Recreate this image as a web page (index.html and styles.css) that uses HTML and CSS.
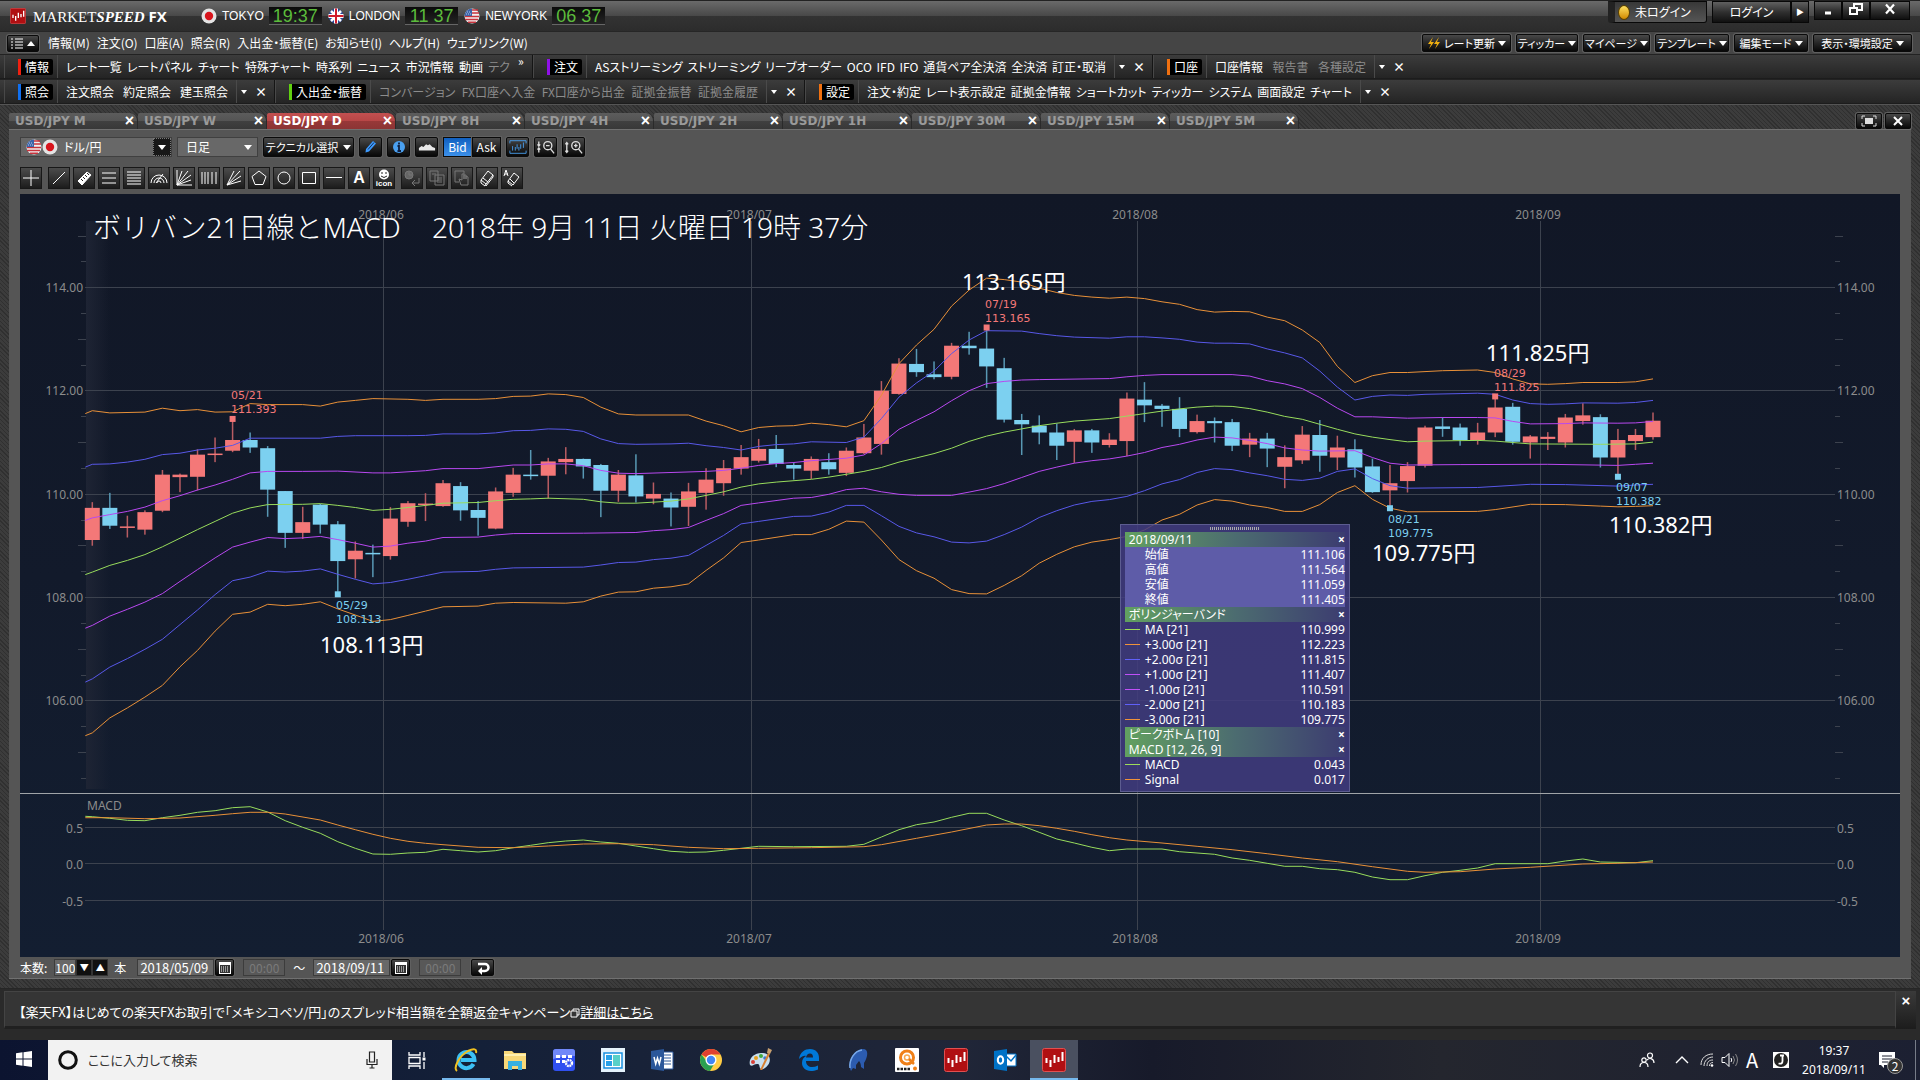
FILE: index.html
```html
<!DOCTYPE html>
<html lang="ja">
<head>
  <meta charset="UTF-8">
  <title>MARKETSPEED FX</title>
  <link rel="stylesheet" href="styles.css">
</head>
<body>

<!-- 共通アイコン -->
<svg class="defs" aria-hidden="true">
  <symbol id="jp" viewBox="0 0 16 16"><circle cx="8" cy="8" r="7.5" fill="#e4e4e4"/><circle cx="8" cy="8" r="4.2" fill="#d8141c"/></symbol>
  <symbol id="us" viewBox="0 0 16 16"><circle cx="8" cy="8" r="7.5" fill="#f0f0f0"/><path d="M8 2h6M8 5h7M1 8.500h14M1 11.500h13M4 14.300h8" stroke="#c8323c" stroke-width="1.500"/><path d="M8 .5A7.500 7.500 0 0 0 .5 8H8z" fill="#3c64a8"/><path d="M3 4h4M2 6h5" stroke="#b8c8e8" stroke-dasharray="1 1"/></symbol>
  <symbol id="uk" viewBox="0 0 16 16"><circle cx="8" cy="8" r="7.500" fill="#2a4a9a"/><path d="M3 3l10 10M13 3L3 13" stroke="#fff" stroke-width="2.500"/><path d="M8 .5v15M.5 8h15" stroke="#fff" stroke-width="4"/><path d="M8 .5v15M.5 8h15" stroke="#d01c2c" stroke-width="2"/></symbol>
  <symbol id="ms" viewBox="0 0 24 24"><rect x=".5" y=".5" width="23" height="23" rx="2" fill="#b00f12" stroke="#e05050"/><path d="M4.500 10v5M8.500 12v7M12.500 7v8M16.500 9v5M20.500 4v9" stroke="#fff" stroke-width="2"/></symbol>
  <symbol id="cal" viewBox="0 0 14 14"><path d="M1 1h12v12H1z" fill="#fff"/><path d="M2 4h10v8H2z" fill="#333"/><path d="M3 6h8M3 8h8M3 10h8" stroke="#fff" stroke-dasharray="1 1"/></symbol>
</svg>

<header class="titlebar">
  <svg class="i16"><use href="#ms"/></svg>
  <h1 class="brand">MARKET<em>SPEED</em> <b>FX</b></h1>
  <div class="clocks">
    <div class="clock"><svg class="i16"><use href="#jp"/></svg><span>TOKYO</span><time>19:37</time></div>
    <div class="clock"><svg class="i16"><use href="#uk"/></svg><span>LONDON</span><time>11 37</time></div>
    <div class="clock"><svg class="i16"><use href="#us"/></svg><span>NEWYORK</span><time>06 37</time></div>
  </div>
  <div class="login">
    <span class="login-state"><i class="lamp"></i>未ログイン</span>
    <button class="login-btn">ログイン</button><button class="login-more" aria-label="ログインメニュー">▶</button>
  </div>
  <div class="winbtns">
    <button aria-label="最小化"><svg viewBox="0 0 16 14"><path d="M5 11h6" stroke="#fff" stroke-width="3"/></svg></button>
    <button aria-label="元に戻す"><svg viewBox="0 0 16 14"><path d="M6 5V2h8v6h-4M2 6h7v6H2z" fill="none" stroke="#fff" stroke-width="2"/></svg></button>
    <button class="wide" aria-label="閉じる"><svg viewBox="0 0 16 14"><path d="M4 2.500l8 9M12 2.500l-8 9" stroke="#fff" stroke-width="2.200"/></svg></button>
  </div>
</header>

<nav class="menubar">
  <button class="menu-toggle btn" aria-label="メニュー"><svg viewBox="0 0 24 12"><path d="M0 2h2M4 2h8M0 5h2M4 5h8M0 8h2M4 8h8M0 11h2M4 11h8" stroke="#fff"/><path d="M16 9h8l-4-5z" fill="#fff"/></svg></button>
  <div class="menus">
    <a href="#">情報(M)</a><a href="#">注文(O)</a><a href="#">口座(A)</a><a href="#">照会(R)</a><a href="#">入出金・振替(E)</a><a href="#">お知らせ(I)</a><a href="#">ヘルプ(H)</a><a href="#">ウェブリンク(W)</a>
  </div>
  <div class="quick">
    <button class="btn q-rate"><svg viewBox="0 0 14 14"><path d="M6 1L1 8h3l-2 5 5-7H4zM12 1L7 8h3l-2 5 5-7h-3z" fill="#f0b010"/></svg>レート更新<i class="dd"></i></button>
    <button class="btn q-a">ティッカー<i class="dd"></i></button>
    <button class="btn q-b">マイページ<i class="dd"></i></button>
    <button class="btn q-c">テンプレート<i class="dd"></i></button>
    <button class="btn q-c">編集モード<i class="dd"></i></button>
    <button class="btn q-d">表示・環境設定<i class="dd"></i></button>
  </div>
</nav>

<div class="toolrow">
  <div class="group g-info"><i class="grip"></i><b class="tag red">情報</b>
    <div class="items"><a href="#">レート一覧</a><a href="#">レートパネル</a><a href="#">チャート</a><a href="#">特殊チャート</a><a href="#">時系列</a><a href="#">ニュース</a><a href="#">市況情報</a><a href="#">動画</a><a href="#" class="off">テク</a></div>
    <span class="more">»</span></div>
  <div class="group g-order"><i class="grip"></i><b class="tag purple">注文</b>
    <div class="items"><a href="#">ASストリーミング</a><a href="#">ストリーミング</a><a href="#">リーブオーダー</a><a href="#">OCO</a><a href="#">IFD</a><a href="#">IFO</a><a href="#">通貨ペア全決済</a><a href="#">全決済</a><a href="#">訂正・取消</a></div>
    <div class="ctl"><button aria-label="展開"><i class="dd"></i></button><button aria-label="閉じる">×</button></div></div>
  <div class="group g-acct"><i class="grip"></i><b class="tag orange">口座</b>
    <div class="items"><a href="#">口座情報</a><a href="#" class="off">報告書</a><a href="#" class="off">各種設定</a></div>
    <div class="ctl"><button aria-label="展開"><i class="dd"></i></button><button aria-label="閉じる">×</button></div></div>
</div>
<div class="toolrow">
  <div class="group g-query"><i class="grip"></i><b class="tag blue">照会</b>
    <div class="items"><a href="#">注文照会</a><a href="#">約定照会</a><a href="#">建玉照会</a></div>
    <div class="ctl"><button aria-label="展開"><i class="dd"></i></button><button aria-label="閉じる">×</button></div></div>
  <div class="group g-cash"><i class="grip"></i><b class="tag green">入出金・振替</b>
    <div class="items off"><a href="#">コンバージョン</a><a href="#">FX口座へ入金</a><a href="#">FX口座から出金</a><a href="#">証拠金振替</a><a href="#">証拠金履歴</a></div>
    <div class="ctl"><button aria-label="展開"><i class="dd"></i></button><button aria-label="閉じる">×</button></div></div>
  <div class="group g-setup"><i class="grip"></i><b class="tag orange">設定</b>
    <div class="items"><a href="#">注文・約定</a><a href="#">レート表示設定</a><a href="#">証拠金情報</a><a href="#">ショートカット</a><a href="#">ティッカー</a><a href="#">システム</a><a href="#">画面設定</a><a href="#">チャート</a></div>
    <div class="ctl"><button aria-label="展開"><i class="dd"></i></button><button aria-label="閉じる">×</button></div></div>
</div>

<main class="desk">
  <div class="tabs">
    <div class="tab">USD/JPY M<button aria-label="閉じる">×</button></div>
    <div class="tab">USD/JPY W<button aria-label="閉じる">×</button></div>
    <div class="tab on">USD/JPY D<button aria-label="閉じる">×</button></div>
    <div class="tab">USD/JPY 8H<button aria-label="閉じる">×</button></div>
    <div class="tab">USD/JPY 4H<button aria-label="閉じる">×</button></div>
    <div class="tab">USD/JPY 2H<button aria-label="閉じる">×</button></div>
    <div class="tab">USD/JPY 1H<button aria-label="閉じる">×</button></div>
    <div class="tab">USD/JPY 30M<button aria-label="閉じる">×</button></div>
    <div class="tab">USD/JPY 15M<button aria-label="閉じる">×</button></div>
    <div class="tab">USD/JPY 5M<button aria-label="閉じる">×</button></div>
    <div class="tabs-end">
      <button class="btn" aria-label="最大化"><svg viewBox="0 0 16 12"><path d="M1 4V1h3M12 1h3v3M15 8v3h-3M4 11H1V8" fill="none" stroke="#ddd"/><path d="M4 3h8v6H4z" fill="#ddd"/></svg></button>
      <button class="btn" aria-label="閉じる"><svg viewBox="0 0 16 12"><path d="M4 2l8 8M12 2l-8 8" stroke="#fff" stroke-width="2"/></svg></button>
    </div>
  </div>

  <section class="win">
    <div class="bar">
      <label class="combo pair"><svg class="i16"><use href="#us"/></svg><svg class="i16"><use href="#jp"/></svg><select aria-label="通貨ペア"><option>ドル/円</option></select><span class="combo-btn"><i class="dd"></i></span></label>
      <label class="combo span"><select aria-label="足種"><option>日足</option></select><i class="dd"></i></label>
      <button class="btn tech">テクニカル選択<i class="dd"></i></button>
      <button class="btn ic" aria-label="描画"><svg viewBox="0 0 16 16"><path d="M3 10l7-8 3 2.500-7 8-3.500 1z" fill="#3c9aff"/><path d="M5 10.500l6-7" stroke="#12305a"/></svg></button>
      <button class="btn ic" aria-label="情報"><svg viewBox="0 0 16 16"><circle cx="8" cy="8" r="6" fill="#4aa0f0"/><path d="M8 3.500v2M6.500 7H8v5M6.500 12h3.500" stroke="#102040" stroke-width="1.800" fill="none"/></svg></button>
      <button class="btn ic" aria-label="エリア"><svg viewBox="0 0 20 16"><path d="M1 12V9l3-2 2 1 3-3 2 1 2-1 3 3 3 1v3z" fill="#e8e8e8"/></svg></button>
      <div class="seg"><button class="btn on">Bid</button><button class="btn">Ask</button></div>
      <button class="btn ic" aria-label="自動調整"><svg viewBox="0 0 20 16"><path d="M1 4V1h18v3M1 12v3h18v-3M4 7v5M7 8v4M9 5v5M11 8v4M13 5v5M16 3v6" fill="none" stroke="#4aa0f0"/></svg></button>
      <button class="btn ic" aria-label="縮小"><svg viewBox="0 0 20 16"><g fill="none" stroke="#ddd" stroke-width="1.500"><circle cx="12" cy="6.500" r="4.500"/><path d="M15 10l4 5M10 6.500h4M2 2v4M2 14v-4M.5 5L2 7l1.500-2M.5 11L2 9l1.500 2"/></g></svg></button>
      <button class="btn ic" aria-label="拡大"><svg viewBox="0 0 20 16"><g fill="none" stroke="#ddd" stroke-width="1.500"><circle cx="12" cy="6.500" r="4.500"/><path d="M15 10l4 5M10 6.500h4M12 4.500v4M2 3v11M.5 5L2 3l1.500 2M.5 12L2 14l1.500-2"/></g></svg></button>
    </div>
    <div class="bar draw">
      <button class="btn" aria-label="十字"><svg viewBox="0 0 18 18"><path d="M1 9h16M9 1v16"/></svg></button>
      <button class="btn gap" aria-label="直線"><svg viewBox="0 0 18 18"><path d="M3 15L15 3"/></svg></button>
      <button class="btn" aria-label="定規"><svg viewBox="0 0 18 18"><path d="M3 12L12 3l4 3-9 10z" fill="#fff"/><path d="M6 10l2 2M8 8l2 2M10 6l2 2M12 4l2 2" stroke="#222"/></svg></button>
      <button class="btn" aria-label="水平3本"><svg viewBox="0 0 18 18"><path d="M2 4h14M2 9h14M2 14h14"/></svg></button>
      <button class="btn" aria-label="水平5本"><svg viewBox="0 0 18 18"><path d="M2 3h14M2 6h14M2 9h14M2 12h14M2 15h14"/></svg></button>
      <button class="btn" aria-label="アーク"><svg viewBox="0 0 18 18"><path d="M1 14a8 8 0 0 1 16 0M4 14a5 5 0 0 1 10 0M7 14a2 2 0 0 1 4 0M6 14l7-9"/></svg></button>
      <button class="btn" aria-label="ファン"><svg viewBox="0 0 18 18"><path d="M2 1v15h15M2 16L7 2M2 16L13 2M2 16L16 6M2 16l14-5"/></svg></button>
      <button class="btn" aria-label="垂直"><svg viewBox="0 0 18 18"><path d="M2 3v12M5 3v12M8 3v12M12 3v12M16 3v12"/></svg></button>
      <button class="btn" aria-label="ギャン"><svg viewBox="0 0 18 18"><path d="M2 16L9 2M2 16L15 2M2 16l14-9M2 16l14-4"/></svg></button>
      <button class="btn" aria-label="五角形"><svg viewBox="0 0 18 18"><path d="M9 2l7 5.500-3 8H5l-3-8z"/></svg></button>
      <button class="btn" aria-label="円"><svg viewBox="0 0 18 18"><circle cx="9" cy="9" r="6"/></svg></button>
      <button class="btn" aria-label="四角"><svg viewBox="0 0 18 18"><path d="M2.500 3.500h13v11h-13z"/></svg></button>
      <button class="btn" aria-label="線分"><svg viewBox="0 0 18 18"><path d="M1 8.500h16"/></svg></button>
      <button class="btn letter">A</button>
      <button class="btn icon-btn"><svg viewBox="0 0 18 11"><circle cx="9" cy="5.500" r="5" fill="#fff" stroke="none"/><path d="M7 3v2M11 3v2M6 7q3 3 6 0" stroke="#222"/></svg>icon</button>
      <button class="btn gap dim" aria-label="戻す"><svg viewBox="0 0 18 18"><circle cx="6" cy="6" r="4" fill="#666"/><path d="M16 9v5H9M12 11l-3 3 3 3M6 3v3h3"/></svg></button>
      <button class="btn dim" aria-label="複製"><svg viewBox="0 0 18 18"><path d="M2 2h8v10H2zM7 6h9v10H7zM9 9h5M9 11h5M9 13h5M4 5h4"/></svg></button>
      <button class="btn dim" aria-label="移動"><svg viewBox="0 0 18 18"><path d="M2 2h9v3M2 2v11h4M6 10l2 6h7V8l-2-1v3-4h-2v4-5H9v6z"/></svg></button>
      <button class="btn" aria-label="消去"><svg viewBox="0 0 18 18"><path d="M3 11l7-9 5 4-7 9zM5 9l5 4M3 11v3l4 3 1-2M15 6v2l-7 9"/></svg></button>
      <button class="btn" aria-label="全消去"><svg viewBox="0 0 18 18"><path d="M5 12l6-8 5 4-6 8zM7 10l4 4M5 12v2l4 3M1 7l2-6 2 6M2 5h3"/></svg></button>
    </div>

    <div class="chart">
      <svg id="chart" viewBox="20 194 1880 763" preserveAspectRatio="xMidYMin meet" role="img" aria-label="USD/JPY 日足 ボリンジャーバンドとMACD"></svg>
      <div class="legend">
        <i class="handle"></i>
        <table>
          <tbody>
            <tr class="head"><th colspan="2">2018/09/11</th><td><button aria-label="閉じる">×</button></td></tr>
            <tr class="px"><td></td><th>始値</th><td>111.106</td></tr>
            <tr class="px"><td></td><th>高値</th><td>111.564</td></tr>
            <tr class="px"><td></td><th>安値</th><td>111.059</td></tr>
            <tr class="px"><td></td><th>終値</th><td>111.405</td></tr>
            <tr class="head"><th colspan="2">ボリンジャーバンド</th><td><button aria-label="閉じる">×</button></td></tr>
            <tr><td><i class="ln c-ma"></i></td><th>MA [21]</th><td>110.999</td></tr>
            <tr><td><i class="ln c-s3"></i></td><th>+3.00σ [21]</th><td>112.223</td></tr>
            <tr><td><i class="ln c-s2"></i></td><th>+2.00σ [21]</th><td>111.815</td></tr>
            <tr><td><i class="ln c-s1"></i></td><th>+1.00σ [21]</th><td>111.407</td></tr>
            <tr><td><i class="ln c-s1"></i></td><th>-1.00σ [21]</th><td>110.591</td></tr>
            <tr><td><i class="ln c-s2"></i></td><th>-2.00σ [21]</th><td>110.183</td></tr>
            <tr><td><i class="ln c-s3"></i></td><th>-3.00σ [21]</th><td>109.775</td></tr>
            <tr class="head"><th colspan="2">ピークボトム [10]</th><td><button aria-label="閉じる">×</button></td></tr>
            <tr class="head"><th colspan="2">MACD [12, 26, 9]</th><td><button aria-label="閉じる">×</button></td></tr>
            <tr><td><i class="ln c-ma"></i></td><th>MACD</th><td>0.043</td></tr>
            <tr><td><i class="ln c-s3"></i></td><th>Signal</th><td>0.017</td></tr>
          </tbody>
        </table>
      </div>
    </div>

    <form class="range">
      <label for="count">本数:</label>
      <div class="spin"><input id="count" type="text" value="100"><button type="button" aria-label="減らす">▼</button><button type="button" aria-label="増やす">▲</button></div>
      <span class="unit">本</span>
      <input class="date" type="text" value="2018/05/09" aria-label="開始日"><button type="button" class="btn cal" aria-label="カレンダー"><svg><use href="#cal"/></svg></button>
      <input class="hm" type="text" value="00:00" aria-label="開始時刻" disabled>
      <span class="tilde">～</span>
      <input class="date" type="text" value="2018/09/11" aria-label="終了日"><button type="button" class="btn cal" aria-label="カレンダー"><svg><use href="#cal"/></svg></button>
      <input class="hm" type="text" value="00:00" aria-label="終了時刻" disabled>
      <button type="button" class="btn apply" aria-label="更新"><svg viewBox="0 0 16 14"><path d="M3 3h7a3 3 0 0 1 0 7H6" fill="none" stroke="#fff" stroke-width="2.500"/><path d="M7 6v8l-4-4z" fill="#fff"/></svg></button>
    </form>
  </section>
</main>

<div class="news">
  <p>【楽天FX】はじめての楽天FXお取引で「メキシコペソ/円」のスプレッド相当額を全額返金キャンペーン<svg viewBox="0 0 10 10"><path d="M1 3h6v6H1zM3 3V1h6v6H7" fill="none" stroke="#fff"/></svg><a href="#">詳細はこちら</a></p>
  <button aria-label="閉じる">×</button>
</div>

<footer class="taskbar">
  <button class="start" aria-label="スタート"><svg viewBox="0 0 16 16"><path d="M0 2.300l6.500-1v6.200H0zM7.500 1.200L16 0v7.500H7.500zM0 8.500h6.500v6.200L0 13.700zM7.500 8.500H16V16l-8.500-1.200z" fill="#fff"/></svg></button>
  <label class="search"><svg class="cortana" viewBox="0 0 20 20"><circle cx="10" cy="10" r="8.300" fill="none" stroke="#111" stroke-width="3"/></svg><input type="text" placeholder="ここに入力して検索"><svg class="mic" viewBox="0 0 12 18"><path d="M3.500 1h5v10h-5zM1 8v5.500h10V8M6 13.500V17M3.500 17h5" fill="none" stroke="#222" stroke-width="1.200"/></svg></label>
  <div class="apps">
    <button aria-label="タスクビュー"><svg viewBox="0 0 24 24"><path d="M4 4v3h11V4M4 21v-3h11v3M4 9.500h11v6H4zM19 4v5M19 14v7" fill="none" stroke="#fff" stroke-width="1.300"/><path d="M17.500 9.500h3v3h-3z" fill="#fff"/></svg></button>
    <button class="run" aria-label="Internet Explorer"><svg viewBox="0 0 24 24"><path d="M19.500 16a8 8 0 1 1 1-4H7" fill="none" stroke="#3cc0f4" stroke-width="4"/><path d="M3 23C-1 20 5 8 14 3c6-3 9-2 8 2" fill="none" stroke="#f0c020" stroke-width="2"/></svg></button>
    <button aria-label="エクスプローラー"><svg viewBox="0 0 24 24"><path d="M1 3h8l2 2h12v16H1z" fill="#f8d878"/><path d="M1 6h22v2H1z" fill="#fff0b0"/><path d="M5 22v-9h14v9h-4v-4H9v4z" fill="#38b0e0"/></svg></button>
    <button aria-label="アプリ設定"><svg viewBox="0 0 24 24"><rect x="1" y="1" width="22" height="22" rx="3" fill="#3050f0"/><path d="M1 4q0-3 3-3h16q3 0 3 3v4Q10 8 1 11z" fill="#7088f8"/><path d="M4 7h4v3H4zM10 7h4v3h-4zM16 7h4v3h-4zM4 12h4v3H4zM10 12h3v3h-3z" fill="#fff"/><circle cx="17" cy="15" r="3" fill="none" stroke="#fff" stroke-width="2.400" stroke-dasharray="1.800 .6"/></svg></button>
    <button aria-label="ウィンドウ"><svg viewBox="0 0 24 24"><path d="M0 0h24v24H0z" fill="#e4f2fc"/><path d="M3 5h18v15H3z" fill="#fff" stroke="#1890e0" stroke-width="1.500"/><path d="M5 7h6v5H5zM5 13h6v5H5z" fill="#28a0e8"/><path d="M12 7h7v11h-7z" fill="#58d0c8"/></svg></button>
    <button aria-label="Word"><svg viewBox="0 0 24 24"><path d="M12 4h11v17H12z" fill="#fff" stroke="#2b579a"/><path d="M14 7h7M14 10h7M14 13h7M14 16h7" stroke="#2b579a"/><path d="M1 3l13-2v22L1 21z" fill="#2b579a"/><path d="M4 9l1.700 7L7.500 10l1.800 6L11 9" fill="none" stroke="#fff" stroke-width="1.500"/></svg></button>
    <button aria-label="Chrome"><svg viewBox="0 0 24 24"><circle cx="12" cy="12" r="11" fill="#fc4"/><path d="M12 12L2.500 6.500A11 11 0 0 1 21.500 6.500H12z" fill="#e04030"/><path d="M2.500 6.500A11 11 0 0 0 11 23l5-8.500-4-2.500-4.500 1z" fill="#2aa050"/><circle cx="12" cy="12" r="5.500" fill="#fff"/><circle cx="12" cy="12" r="4.200" fill="#4285f4"/></svg></button>
    <button aria-label="ペイント"><svg viewBox="0 0 24 24"><path d="M2 17C0 10 7 4 15 5c8 1 8 8 5 12-4 5-7 5-8 3s0-4-3-4-5 3-7 1z" fill="#c8e0f0"/><circle cx="8" cy="10" r="2" fill="#e8a020"/><circle cx="13" cy="8" r="2" fill="#40a840"/><circle cx="5" cy="14" r="2" fill="#d84038"/><circle cx="17" cy="10" r="1.800" fill="#3878d0"/><path d="M12 22l8-17 2 1-8 16z" fill="#d88030"/><path d="M19 5l1-5 4 2-2 4z" fill="#c8a070"/></svg></button>
    <button aria-label="Edge"><svg viewBox="0 0 24 24"><path d="M2 11C3 4 8 1 13 1c6 0 9 4 9 9v3H9c0 4 3 6 6 6 2 0 4-.5 6-1.500v4C18 23 16 23 14 23 8 23 5 19 5 15c0-4 2-6 5-7.500-3 0-6 1-8 3.500zM9 9.500h7C16 7 15 5.500 13 5.500S9.500 7 9 9.500z" fill="#0078d7" fill-rule="evenodd"/></svg></button>
    <button aria-label="ソフト"><svg viewBox="0 0 24 24"><path d="M5 23C1 14 7 2 17 1c6 0 5 8 1 14v6l-3-2c0-3-1-5-2-6l-3 4v4l-3-1z" fill="#2c5cb0"/><path d="M4 20C3 12 8 3 16 2" fill="none" stroke="#78a8e8" stroke-width="1.500"/></svg></button>
    <button aria-label="チャート"><svg viewBox="0 0 24 24"><rect width="24" height="24" rx="1" fill="#fff"/><circle cx="12" cy="9.500" r="6.500" fill="none" stroke="#f08018" stroke-width="3"/><circle cx="12" cy="9.500" r="2.500" fill="none" stroke="#f8a850" stroke-width="1.500"/><path d="M14 11l5 5" stroke="#f08018" stroke-width="2.500"/><path d="M2 21h14" stroke="#222" stroke-width="2.500" stroke-dasharray="2.500 1"/><circle cx="20" cy="20.500" r="2" fill="#f08018"/></svg></button>
    <button aria-label="マーケットスピード"><svg viewBox="0 0 24 24"><use href="#ms"/></svg></button>
    <button aria-label="Outlook"><svg viewBox="0 0 24 24"><path d="M12 6h11v12H12z" fill="#fff" stroke="#0072c6"/><path d="M13 8l5 5 5-6" fill="none" stroke="#0072c6" stroke-width="1.500"/><path d="M1 3l13-2v22L1 21z" fill="#0072c6"/><ellipse cx="7.500" cy="12" rx="2.700" ry="3.700" fill="none" stroke="#fff" stroke-width="2"/></svg></button>
    <button class="run active" aria-label="マーケットスピードFX"><svg viewBox="0 0 24 24"><use href="#ms"/></svg></button>
  </div>
  <div class="tray">
    <svg class="people" viewBox="0 0 16 16"><g fill="none" stroke="#fff" stroke-width="1.200"><circle cx="11" cy="3.500" r="2.500"/><circle cx="5" cy="8" r="2.200"/><path d="M1 15c0-6 8-6 8 0M8 8c3-3 7-1 7 3"/></g></svg>
    <svg class="chev" viewBox="0 0 14 8"><path d="M1 7l6-6 6 6" fill="none" stroke="#fff" stroke-width="1.400"/></svg>
    <svg class="wifi" viewBox="0 0 14 14"><g fill="none" stroke="#ddd"><path d="M1 12C1 5 6 1 13 1M4 13C4 8 8 4 13 4M7 13c0-4 2-6 6-6M9.500 13c0-2 1-3.500 3.500-3.500"/></g><circle cx="12" cy="12.500" r="1.300" fill="#fff"/></svg>
    <svg class="vol" viewBox="0 0 18 14"><path d="M1 4.500h3l4-4v13l-4-4H1zM10 5q1.500 2 0 4" fill="none" stroke="#fff"/><path d="M12 3q3 4 0 8M14.500 1q4 6 0 12" fill="none" stroke="#888"/></svg>
    <span class="ime">A</span>
    <svg class="jbox" viewBox="0 0 16 16"><path d="M0 0h16v16H0z" fill="#fff"/><circle cx="8" cy="8" r="7" fill="#222"/><path d="M7 3.500h4M9.500 3.500V9q0 3.500-4 2.500" fill="none" stroke="#fff" stroke-width="1.800"/></svg>
    <div class="now"><span>19:37</span><span>2018/09/11</span></div>
    <div class="notice"><svg viewBox="0 0 16 16"><path d="M0 0h16v13H5v3l-3-3H0z" fill="#fff"/><path d="M3 4h10M3 7h10M3 10h6" stroke="#1c2030"/></svg><span>2</span></div>
  </div>
</footer>

<script src="chart.js"></script>
</body>
</html>
```
FILE: styles.css
```css
* {
  box-sizing: border-box;
}
body {
  margin: 0;
  height: 100vh;
  display: flex;
  flex-direction: column;
  background: #454545;
  color: #fff;
  font-family: "Noto Sans CJK JP", "Liberation Sans", sans-serif;
  font-size: 12px;
  line-height: 16px;
  font-feature-settings: "palt";
  overflow: hidden;
}
a {
  color: inherit;
  text-decoration: none;
}
button, input, select {
  font: inherit;
  color: inherit;
  font-feature-settings: inherit;
  margin: 0;
  padding: 0;
  border: none;
  background: none;
}
select {
  appearance: none;
}
.defs {
  position: absolute;
  width: 0;
  height: 0;
}
.i16 {
  width: 16px;
  height: 16px;
  flex: none;
}
.btn {
  display: flex;
  align-items: center;
  justify-content: center;
  border: 1px solid #0a0a0a;
  border-radius: 2px;
  background: linear-gradient(#484848, #262626 50%, #080808);
  box-shadow: 0 0 0 1px #606060;
  white-space: nowrap;
}
.dd {
  display: inline-block;
  border: 4px solid transparent;
  border-top: 5px solid #fff;
  border-bottom: none;
}

/* タイトルバー */
.titlebar {
  flex: none;
  height: 32px;
  display: flex;
  align-items: center;
  padding: 0 10px;
  border-top: 1px solid #222;
  border-bottom: 1px solid #262626;
  background: linear-gradient(#6a6a6a, #484848 50%, #333 50%, #2c2c2c);
}
.brand {
  margin: 0 0 0 7px;
  width: 168px;
  font: 15px "Liberation Serif", serif;
  white-space: nowrap;
}
.brand em {
  font-weight: bold;
}
.brand b {
  font: bold 15px "Open Sans", sans-serif;
}
.clocks {
  display: flex;
  gap: 6px;
  font-family: "Liberation Sans", sans-serif;
}
.clock {
  display: flex;
  align-items: center;
  gap: 5px;
}
.clock time {
  width: 53px;
  height: 18px;
  border-bottom: 1px solid #666;
  background: linear-gradient(#0a0a0a, #242424);
  color: #5cbc3c;
  font-size: 18px;
  line-height: 18px;
  text-align: center;
}
.login {
  margin-left: auto;
  align-self: flex-start;
  display: flex;
  height: 22px;
}
.login-state {
  width: 99px;
  margin-right: 5px;
  padding-left: 3px;
  display: flex;
  align-items: center;
  gap: 5px;
  border: 1px solid #080808;
  border-left: 7px solid #222;
  border-radius: 0 0 3px 3px;
  background: linear-gradient(#383838, #555);
}
.lamp {
  width: 12px;
  height: 15px;
  border: 1px solid #5c4200;
  border-radius: 50%;
  background: linear-gradient(#ffe060, #d08a00);
}
.login-btn, .login-more {
  width: 79px;
  border: 1px solid #080808;
  background: linear-gradient(#606060, #303030 50%, #101010);
}
.login-more {
  width: 18px;
  font-size: 8px;
}
.winbtns {
  align-self: flex-start;
  display: flex;
  height: 19px;
  margin-left: 5px;
}
.winbtns button {
  width: 28px;
  border: 1px solid #080808;
  background: linear-gradient(#606060, #303030 50%, #101010);
}
.winbtns .wide {
  width: 40px;
}
.winbtns svg {
  width: 16px;
  height: 14px;
}

/* メニュー */
.menubar {
  flex: none;
  height: 22px;
  display: flex;
  align-items: center;
  padding: 0 8px 0 7px;
  background: #454545;
}
.menu-toggle {
  width: 32px;
  height: 17px;
}
.menu-toggle svg {
  width: 24px;
  height: 12px;
}
.menus {
  width: 480px;
  margin-left: 9px;
  display: flex;
  justify-content: space-between;
  white-space: nowrap;
}
.quick {
  margin-left: auto;
  display: flex;
  gap: 5px;
}
.quick .btn {
  height: 18px;
  gap: 3px;
  font-size: 11px;
}
.quick svg {
  width: 14px;
  height: 14px;
}
.quick .q-rate { width: 89px; }
.quick .q-a { width: 62px; }
.quick .q-b { width: 67px; }
.quick .q-c { width: 74px; }
.quick .q-d { width: 99px; }

/* ツールバー */
.toolrow {
  flex: none;
  height: 25px;
  display: flex;
  padding-left: 4px;
  border-top: 1px solid #222;
  border-bottom: 1px solid #1c1c1c;
  background: linear-gradient(#3c3c3c, #242424);
}
.group {
  display: flex;
  align-items: center;
  border-right: 1px solid #151515;
  border-left: 1px solid #484848;
  padding-left: 2px;
}
.g-info { width: 529px; }
.g-order { width: 620px; }
.g-acct { width: 259px; border-right: none; }
.g-query { width: 271px; }
.g-cash { width: 530px; }
.g-setup { width: 593px; border-right: none; }
.grip {
  width: 6px;
  height: 16px;
  margin-right: 5px;
  background: radial-gradient(#777 40%, transparent 50%) 0 0 / 2px 2px;
}
.tag {
  height: 16px;
  padding: 0 4px;
  border-left: 3px solid;
  border-radius: 0 2px 2px 0;
  background: #000;
  font-weight: normal;
  line-height: 15px;
  white-space: nowrap;
}
.tag.red { border-color: #f02010; }
.tag.purple { border-color: #9010e8; }
.tag.orange { border-color: #f07010; }
.tag.blue { border-color: #1070f0; }
.tag.green { border-color: #60d010; }
.items {
  flex: 1;
  display: flex;
  justify-content: space-between;
  align-self: stretch;
  align-items: center;
  margin-left: 4px;
  padding: 0 8px;
  border-left: 1px solid #4a4a4a;
  white-space: nowrap;
}
.off {
  color: #8c8c8c;
}
.more {
  width: 14px;
  align-self: flex-start;
  line-height: 12px;
}
.ctl {
  display: flex;
  align-self: stretch;
  align-items: center;
  width: 38px;
  gap: 8px;
  padding-left: 4px;
  border-left: 1px solid #4a4a4a;
}
.ctl .dd {
  border-width: 4px 3px 0;
}
.ctl button {
  font-weight: bold;
  display: flex;
}

/* チャートウィンドウ */
.desk {
  flex: 1;
  min-height: 0;
  display: flex;
  flex-direction: column;
  padding: 8px 9px 9px;
  border-top: 1px solid #555;
  background: repeating-linear-gradient(45deg, #303030 0 1px, #3c3c3c 1px 3px);
}
.tabs {
  flex: none;
  height: 16px;
  display: flex;
}
.tab {
  width: 129px;
  padding: 0 3px 0 6px;
  display: flex;
  justify-content: space-between;
  align-items: center;
  border-right: 1px solid #2a2a2a;
  border-radius: 2px 8px 0 0;
  background: linear-gradient(#5c5c5c, #545454 50%, #404040 50%, #383838);
  color: #9a9a9a;
  font: bold 12px "DejaVu Sans", sans-serif;
}
.tab button {
  color: #fff;
  font: bold 16px/14px "Liberation Sans", sans-serif;
}
.tab.on {
  background: linear-gradient(#c25050, #b84646 50%, #983838 50%, #8c3434);
  color: #fff;
}
.tabs-end {
  margin-left: auto;
  display: flex;
  gap: 3px;
}
.tabs-end .btn {
  width: 26px;
}
.tabs-end svg {
  width: 16px;
  height: 12px;
}
.win {
  flex: 1;
  min-height: 0;
  display: flex;
  flex-direction: column;
  padding: 7px 11px 0;
  border-top: 1px solid #707070;
  border-bottom: 1px solid #707070;
  background: #555;
}
.bar {
  flex: none;
  display: flex;
  gap: 5px;
  height: 20px;
}
.bar .ic {
  width: 23px;
}
.bar .ic svg {
  width: 18px;
  height: 16px;
}
.combo {
  display: flex;
  align-items: center;
  background: #686868;
  border: 1px solid #404040;
}
.combo select {
  flex: 1;
  min-width: 0;
  padding: 0 6px;
}
.pair {
  width: 152px;
  padding-left: 5px;
}
.combo-btn {
  width: 18px;
  align-self: stretch;
  display: flex;
  align-items: center;
  justify-content: center;
  background: #181818;
  border: 1px dotted #777;
}
.span {
  width: 81px;
  padding: 0 5px 0 2px;
}
.tech {
  width: 91px;
  gap: 5px;
  font-size: 11px;
}
.seg {
  display: flex;
}
.seg .btn {
  width: 29px;
  border-radius: 0;
}
.seg .on {
  background: linear-gradient(#1060c0, #3c90ea);
}
.draw {
  height: 22px;
  margin: 10px 0 5px;
  gap: 3px;
}
.draw .btn {
  width: 22px;
  border: 1px solid #181818;
  border-radius: 0;
  background: linear-gradient(#4c4c4c, #1c1c1c);
  box-shadow: none;
}
.draw svg {
  width: 18px;
  height: 18px;
  fill: none;
  stroke: #fff;
}
.draw .gap {
  margin-left: 3px;
}
.draw .dim svg {
  stroke: #777;
}
.draw .letter {
  font: bold 16px "Liberation Sans", sans-serif;
}
.draw .icon-btn {
  flex-direction: column;
  font: bold 8px/8px "Liberation Sans", sans-serif;
}
.icon-btn svg {
  width: 18px;
  height: 11px;
}

.chart {
  flex: 1;
  min-height: 0;
  display: flex;
  position: relative;
  background: linear-gradient(#111726, #121a2b 50%, #131e31);
}
#chart {
  flex: 1;
  min-width: 0;
  font-family: "Noto Sans", "Noto Sans CJK JP", sans-serif;
  font-size: 12px;
}
.grid {
  stroke: #3c424e;
  stroke-width: 1;
  shape-rendering: crispEdges;
}
.split {
  stroke: #a0a4a8;
  shape-rendering: crispEdges;
}
.axis {
  fill: #8c8c8c;
}
.line {
  fill: none;
  stroke-width: 1;
}
.line.ma { stroke: #98dc5c; }
.line.s1 { stroke: #b848f0; }
.line.s2 { stroke: #5858e8; }
.line.s3 { stroke: #e89038; }
.up { fill: #f47878; }
.down { fill: #7cd0f0; }
.wick.up { fill: #b85c62; }
.wick.down { fill: #5898b4; }
.peak {
  font-family: "DejaVu Sans", sans-serif;
  font-size: 11px;
}
.note {
  fill: #fff;
  font-size: 22px;
}
.title {
  fill: #fff;
  font-size: 28px;
  font-weight: 300;
  font-feature-settings: normal;
}

.legend {
  position: absolute;
  left: 58.5%;
  top: 43.3%;
  width: 230px;
  padding: 0 4px 4px;
  border: 1px solid #5c5c90;
  background: rgba(66, 60, 128, .85);
  font-family: "Noto Sans", "Noto Sans CJK JP", sans-serif;
}
.handle {
  display: block;
  width: 50px;
  height: 3px;
  margin: 2px auto;
  background: repeating-linear-gradient(90deg, #aaa 0 1px, transparent 1px 2px);
}
.legend table {
  width: 100%;
  border-collapse: collapse;
}
.legend tr {
  height: 15px;
}
.legend th, .legend td {
  padding: 0;
  font-weight: normal;
  line-height: 15px;
  text-align: left;
}
.legend td:first-child {
  width: 20px;
}
.legend td:last-child {
  text-align: right;
}
.legend .head {
  background: linear-gradient(90deg, #62a060, #4c6c70 50%, #3c3c70);
}
.legend .head th {
  padding-left: 4px;
}
.legend .px {
  background: #5e5ca8;
}
.legend button {
  display: block;
  margin-left: auto;
  font-weight: bold;
  line-height: 15px;
}
.ln {
  display: block;
  width: 15px;
  height: 1px;
}
.c-ma { background: #9ddc5a; }
.c-s3 { background: #f0923a; }
.c-s2 { background: #6060f8; }
.c-s1 { background: #c050f8; }

.range {
  flex: none;
  height: 21px;
  display: flex;
  align-items: center;
}
.range input {
  height: 17px;
  border: 1px solid #3c3c3c;
  background: #686868;
  text-align: center;
}
.spin {
  display: flex;
  margin: 0 6px 0 7px;
}
.spin input {
  width: 22px;
}
.spin button {
  width: 16px;
  border: 1px solid #333;
  background: #101010;
  font-size: 9px;
  line-height: 12px;
}
.unit {
  margin-right: 11px;
}
.range .date {
  width: 77px;
  padding-right: 3px;
  font-size: 13px;
}
.range .hm {
  width: 42px;
  margin-left: 9px;
  background: #585858;
  color: #7a7a7a;
}
.cal {
  width: 19px;
  height: 17px;
  margin-left: 1px;
}
.cal svg {
  width: 14px;
  height: 14px;
}
.tilde {
  width: 28px;
  text-align: center;
}
.apply {
  width: 23px;
  height: 17px;
  margin-left: 10px;
}
.apply svg {
  width: 16px;
  height: 14px;
}

/* お知らせ */
.news {
  flex: none;
  height: 52px;
  padding: 2px 4px 11px;
  display: flex;
  border-top: 1px solid #262626;
  background: #2a2a2a;
}
.news p {
  flex: 1;
  margin: 0;
  padding-left: 14px;
  font-size: 13px;
  line-height: 40px;
  border: 1px solid #444;
  border-bottom: 3px solid #202020;
  background: #353535;
}
.news p svg {
  width: 10px;
  height: 10px;
  vertical-align: middle;
}
.news p a {
  text-decoration: underline;
}
.news button {
  width: 20px;
  padding-bottom: 20px;
  font: bold 15px "Liberation Sans", sans-serif;
  background: linear-gradient(#3a3a3a, #1c1c1c);
}

/* タスクバー */
.taskbar {
  flex: none;
  height: 40px;
  display: flex;
  background: linear-gradient(90deg, #0c1430, #142038 25%, #202638 50%, #171a2a 60%, #24262e 75%, #1c2032);
  font-feature-settings: normal;
}
.start {
  width: 48px;
}
.start svg {
  width: 16px;
  height: 16px;
}
.search {
  width: 344px;
  padding: 0 14px 0 10px;
  display: flex;
  align-items: center;
  background: #f2f2f2;
  color: #333;
}
.search input {
  flex: 1;
  min-width: 0;
  padding: 0 10px;
  font-size: 13px;
  font-feature-settings: "palt";
}
.search input::placeholder {
  color: #333;
}
.cortana {
  width: 20px;
  height: 20px;
}
.mic {
  width: 12px;
  height: 18px;
}
.apps {
  display: flex;
  gap: 1px;
  margin-left: 1px;
}
.apps button {
  width: 48px;
  height: 40px;
  display: flex;
  align-items: center;
  justify-content: center;
}
.apps svg {
  width: 24px;
  height: 24px;
}
.apps .run {
  box-shadow: inset 0 -2px #76b9ed;
}
.apps .active {
  background: #4a5060;
}
.tray {
  margin-left: auto;
  margin-right: 4px;
  padding-right: 4px;
  display: flex;
  align-items: center;
  border-right: 1px solid #777c88;
}
.people {
  width: 16px;
  height: 16px;
  margin-right: 20px;
}
.chev {
  width: 14px;
  height: 8px;
  margin-right: 11px;
}
.wifi {
  width: 14px;
  height: 14px;
  margin-right: 7px;
}
.vol {
  width: 18px;
  height: 14px;
  margin-right: 7px;
}
.ime {
  width: 14px;
  margin-right: 13px;
  font-size: 20px;
}
.jbox {
  width: 16px;
  height: 16px;
}
.now {
  width: 90px;
  display: flex;
  flex-direction: column;
  text-align: center;
  line-height: 19px;
  font-family: "Noto Sans", sans-serif;
}
.notice {
  display: flex;
  width: 32px;
  position: relative;
}
.notice svg {
  width: 16px;
  height: 16px;
}
.notice span {
  position: absolute;
  left: 8px;
  top: 6px;
  width: 16px;
  height: 16px;
  border: 1px solid #999;
  border-radius: 50%;
  background: #333;
  line-height: 14px;
  text-align: center;
}
```
FILE: chart.js
```js
const svg = document.getElementById('chart');
const NS = 'http://www.w3.org/2000/svg';

const FIRST_X = 92.3;   // 1本目の中心
const STEP = 17.536;    // 足の間隔

// 価格目盛: 289単位 = 2円 / MACD目盛: 3単位 = 1px
const xAt = i => FIRST_X + i * STEP;
const yPrice = v => 190 + v / 2.8;
const yMacd = v => 780 + v / 3;

function el(name, attrs, text) {
  const e = document.createElementNS(NS, name);
  for (const k in attrs) e.setAttribute(k, attrs[k]);
  if (text) e.textContent = text;
  svg.appendChild(e);
  return e;
}
function rule(x1, y1, x2, y2, cls) {
  el('line', { x1, y1, x2, y2, class: cls || 'grid' });
}
function label(x, y, text, cls, anchor) {
  el('text', { x, y, class: cls, 'text-anchor': anchor || 'start' }, text);
}

// 左端のぼかし
const defs = el('defs', {});
defs.innerHTML = '<linearGradient id="edge"><stop offset="0" stop-color="#1e2434"/><stop offset="1" stop-color="#1e2434" stop-opacity="0"/></linearGradient>';
el('rect', { x: 86, y: 221, width: 24, height: 568, fill: 'url(#edge)' });

// 目盛
[[287, '114.00'], [390, '112.00'], [494, '110.00'], [597, '108.00'], [700, '106.00']].forEach(([y, t]) => {
  rule(85, y, 1835, y);
  label(83, y + 5, t, 'axis', 'end');
  label(1837, y + 5, t, 'axis');
});
for (let n = 0; n < 22; n++) {
  const y = Math.round(235.6 + n * 25.82);
  if (n % 4 === 2) continue;
  const len = n % 2 ? 5 : 8;
  rule(86 - len, y, 86, y);
  rule(1835, y, 1835 + len, y);
}
[[827, '0.5'], [863, '0.0'], [900, '-0.5']].forEach(([y, t]) => {
  rule(85, y, 1835, y);
  label(83, y + 6, t, 'axis', 'end');
  label(1837, y + 6, t, 'axis');
});
[[383, '2018/06'], [751, '2018/07'], [1137, '2018/08'], [1540, '2018/09']].forEach(([x, t]) => {
  rule(x, 221, x, 930);
  label(x - 2, 219, t, 'axis', 'middle');
  label(x - 2, 943, t, 'axis', 'middle');
});
rule(20, 793, 1900, 793, 'split');
label(87, 810, 'MACD', 'axis');

// ローソク足: 陽線/陰線, 高値, 実体上, 実体下, 安値
const candles = `r 874 890 980 996;b 848 890 940 949;r 912 942 946 973;r 897 902 951 965;r 784 797 898 902;r 794 797 804 846;
r 726 741 803 841;r 693 738 741 762;r 640 700 730 734;b 679 700 721 736;b 717 723 839 915;b 843 843 960 1002;r 887 930 960 977;
b 879 881 937 962;b 927 936 1039 1125;r 984 1010 1034 1088;b 993 1016 1018 1084;r 888 920 1025 1035;r 871 877 929 943;
r 849 878 881 927;r 812 821 885 887;b 818 829 897 926;b 871 896 918 968;r 833 844 948 950;r 778 797 848 859;b 728 797 801 811;
r 750 760 800 864;r 720 753 762 796;b 752 753 774 808;b 767 770 842 916;r 784 797 842 873;b 740 799 858 875;r 819 851 864 880;
b 847 864 889 942;r 820 844 887 941;r 779 811 848 895;r 756 779 821 856;r 714 748 780 797;r 697 725 758 763;b 686 725 767 776;
b 762 770 780 811;r 746 753 786 809;b 737 762 782 797;r 721 730 792 801;r 655 693 737 739;r 535 562 711 741;r 471 486 571 573;
b 445 487 510 523;b 480 516 524 530;r 428 436 523 530;b 397 436 443 461;b 385 444 494 554;b 470 499 643 651;b 627 644 656 742;
b 631 660 679 712;b 654 679 716 756;r 669 673 705 764;b 669 673 707 736;r 681 699 714 721;r 567 584 703 745;b 538 587 603 650;
b 599 604 613 663;b 580 613 669 692;r 629 647 678 682;b 637 647 653 707;b 641 650 716 731;r 680 696 713 748;b 680 696 724 776;
r 715 748 775 835;r 661 685 757 767;b 644 686 744 789;r 688 721 749 784;b 698 726 777 805;b 752 774 846 848;r 770 821 841 885;
r 762 773 815 847;r 660 665 772 777;b 636 662 669 691;b 654 665 700 716;r 652 679 700 713;r 585 609 679 692;b 596 607 705 713;
r 686 690 707 752;r 678 691 697 728;r 627 637 707 721;r 597 631 647 657;b 628 636 749 777;r 669 700 749 796;r 669 686 703 728;
r 623 646 692 699`.split(';');

candles.forEach((row, i) => {
  const [kind, hi, top, bottom, lo] = row.trim().split(' ');
  const cls = kind === 'r' ? 'up' : 'down';
  const x = xAt(i);
  el('rect', { x: x - 0.75, y: yPrice(+hi), width: 1.5, height: (lo - hi) / 2.8, class: 'wick ' + cls });
  el('rect', { x: x - 7.5, y: yPrice(+top), width: 15, height: Math.max(1.5, (bottom - top) / 2.8), class: cls });
});

// "本目:値" の並びを折れ線にする
function line(cls, data, y) {
  const pts = data.trim().split(/\s+/).map(p => {
    const [i, v] = p.split(':').map(Number);
    return xAt(i).toFixed(1) + ',' + y(v).toFixed(1);
  });
  el('polyline', { points: pts.join(' '), class: 'line ' + cls });
}

line('s3', `-.4:626 0:618 1:624 3:622 4:611 5:618 6:615 7:622 8:621 9:598 10:601 12:601 13:605 14:594 15:589 16:584 18:586 19:589
20:586 22:586 23:584 24:578 25:577 26:571 27:573 28:581 29:608 30:627 31:630 34:630 35:647 36:660 37:677 38:665 39:661 40:660
41:653 42:657 43:663 44:646 45:575 46:486 47:434 48:390 49:325 50:280 51:247 52:251 53:258 54:275 55:287 56:295 57:300 58:303
59:300 60:304 61:313 62:320 63:335 64:342 65:340 66:341 67:356 68:366 69:392 70:427 71:494 72:539 73:520 74:511 75:511 77:506
79:504 80:511 81:529 82:543 83:544 84:542 85:539 87:539 88:537 89:529`, yPrice);
line('s2', `-.4:776 0:768 1:767 2:762 3:754 4:741 5:737 6:728 7:723 8:715 9:695 13:695 14:690 15:688 18:688 19:687 20:683 22:683
23:680 24:674 25:673 26:669 27:670 28:676 29:697 30:710 31:712 33:711 34:709 35:716 36:721 37:728 38:718 39:713 40:711 41:705
43:707 44:692 45:640 46:580 47:540 48:507 49:458 50:420 51:394 53:395 54:402 55:408 56:412 58:415 59:411 60:411 61:414 62:418
63:426 64:429 65:429 66:431 67:445 68:456 69:470 70:507 71:552 72:588 73:578 74:574 75:575 76:572 78:570 79:569 80:572 81:588
82:598 83:600 84:599 85:596 87:597 88:595 89:589`, yPrice);
line('s1', `-.4:925 0:918 1:909 2:900 3:888 4:870 5:856 6:840 7:826 8:810 9:792 10:788 12:788 14:787 16:792 17:792 19:786 20:780
22:780 24:770 25:770 26:767 27:767 28:772 29:785 30:793 31:794 33:791 35:788 36:785 37:779 38:771 39:766 40:763 41:758 43:751
44:742 45:710 46:670 47:645 48:621 49:590 50:562 51:542 52:536 53:532 54:531 58:528 59:523 60:519 61:517 65:517 66:521 67:534
68:543 69:556 70:581 71:611 72:635 73:635 75:639 77:637 79:637 80:638 81:648 82:655 84:654 85:652 87:653 88:652 89:648`, yPrice);
line('ma', `-.4:1077 0:1070 1:1051 2:1037 3:1021 4:999 5:975 6:951 7:928 8:905 9:890 10:881 12:880 13:878 14:883 15:889 16:897
17:894 18:889 19:883 20:877 22:875 23:870 24:866 25:865 26:863 28:866 29:873 30:877 31:877 33:871 34:865 35:855 36:845 37:832
38:823 39:818 41:810 42:804 43:796 44:788 45:777 46:762 47:750 48:738 49:723 50:704 51:689 52:678 53:669 54:660 55:653 56:647
58:640 59:633 60:626 61:619 62:613 63:608 64:605 65:606 66:612 67:622 68:634 69:642 70:656 71:670 72:683 73:692 74:699 75:705
76:703 79:701 80:703 81:707 82:711 86:712 88:711 89:706`, yPrice);
line('s1', `-.4:1227 0:1219 1:1193 2:1174 3:1154 4:1130 5:1096 6:1063 7:1030 8:1000 9:986 10:973 11:976 12:974 13:970 14:979
15:989 16:1000 17:997 18:989 19:983 20:973 22:972 23:966 24:962 28:961 31:959 32:954 33:951 34:945 35:925 36:906 37:883 38:876
40:863 41:861 42:852 43:839 44:835 45:845 46:852 47:855 49:855 50:846 51:836 52:822 53:805 54:788 55:776 56:765 57:758 58:753
59:745 60:735 61:721 62:712 63:700 64:692 65:694 66:701 67:710 68:722 69:728 70:731 72:730 73:749 74:765 75:770 78:769 83:768
87:771 88:768 89:765`, yPrice);
line('s2', `-.4:1378 0:1369 1:1336 2:1312 3:1286 4:1258 5:1217 6:1176 7:1133 8:1094 9:1084 10:1067 11:1070 12:1067 13:1061
14:1076 15:1090 16:1103 17:1099 18:1090 19:1080 20:1070 22:1068 23:1062 24:1058 28:1056 29:1050 30:1043 31:1042 32:1035 33:1031
34:1023 35:995 36:967 37:935 38:928 40:914 41:913 42:902 43:883 44:883 45:912 46:942 47:960 48:971 49:986 50:988 51:983 52:965
53:944 54:917 55:898 56:882 57:872 58:867 59:858 60:842 61:823 62:811 63:791 64:780 65:783 66:792 67:800 68:810 69:813 70:807
71:788 72:781 73:808 74:828 75:835 79:833 82:824 84:825 87:829 88:826 89:824`, yPrice);
line('s3', `-.4:1528 0:1520 1:1478 2:1450 3:1420 4:1387 5:1335 6:1289 7:1235 8:1188 9:1182 10:1160 11:1164 12:1160 13:1153
14:1173 15:1190 16:1208 17:1203 18:1191 19:1179 20:1167 22:1165 23:1157 24:1155 27:1157 28:1153 29:1137 30:1126 31:1125 32:1115
33:1111 34:1103 35:1065 36:1030 37:987 38:980 40:965 41:965 42:950 43:927 44:930 45:980 46:1035 47:1066 48:1087 49:1119 50:1130
51:1131 52:1107 53:1080 54:1045 55:1020 56:999 57:986 58:979 59:970 60:952 61:924 62:908 63:882 64:867 65:871 66:882 67:889
68:900 69:900 70:881 71:847 72:828 73:866 74:891 75:901 79:900 80:895 82:880 84:881 86:885 87:887 88:886 89:884`, yPrice);

line('ma', `-.4:109 0:110 1:115 2:121 3:122 4:113 5:106 6:97 7:92 8:83 9:80 10:96 11:122 12:142 13:160 14:185 15:205 16:222
17:223 18:219 19:217 20:208 21:212 22:216 23:212 24:203 25:196 26:188 27:183 28:180 29:186 30:190 31:198 32:206 33:214 34:217
35:216 36:211 37:205 38:199 40:200 43:199 44:193 45:171 46:149 47:134 48:126 49:112 50:100 51:100 52:120 53:137 54:157 55:177
56:189 57:202 58:212 59:207 61:207 62:215 64:223 65:234 66:241 67:250 68:259 69:259 70:266 71:269 72:277 73:291 74:299 75:299
76:287 77:277 78:271 79:264 80:251 83:251 84:243 85:237 86:246 88:248 89:242`, yMacd);
line('s3', `-.4:113 1:113 3:116 5:114 7:106 8:101 9:97 10:97 11:102 13:120 14:135 15:149 16:163 17:175 18:184 19:190 20:194
22:202 24:203 26:198 28:192 30:191 32:194 34:202 36:206 38:205 41:203 44:200 45:194 47:175 49:156 51:135 52:132 53:132 54:137
55:145 56:154 57:164 58:173 59:180 61:189 63:199 65:209 67:221 69:234 71:245 73:260 75:274 76:277 78:275 80:267 82:262 85:252
87:250 89:246`, yMacd);

// ピークボトム: 本目, 値, 色, 文字位置, 日付, 価格
[
  [8, 641, 'up', 231, 399, '05/21', '111.393'],
  [14, 1132, 'down', 336, 609, '05/29', '108.113'],
  [51, 385, 'up', 985, 308, '07/19', '113.165'],
  [74, 891, 'down', 1388, 523, '08/21', '109.775'],
  [80, 578, 'up', 1494, 377, '08/29', '111.825'],
  [87, 803, 'down', 1616, 491, '09/07', '110.382']
].forEach(([i, v, cls, x, y, day, price]) => {
  el('rect', { x: xAt(i) - 3, y: yPrice(v) - 3, width: 6, height: 6, class: cls });
  label(x, y, day, 'peak ' + cls);
  label(x, y + 14, price, 'peak ' + cls);
});

// 書き込み文字
label(93, 238, 'ボリバン21日線とMACD', 'title');
label(432, 238, '2018年 9月 11日 火曜日 19時 37分', 'title');
label(962, 290, '113.165円', 'note');
label(1486, 361, '111.825円', 'note');
label(1609, 533, '110.382円', 'note');
label(1372, 561, '109.775円', 'note');
label(320, 653, '108.113円', 'note');
```
